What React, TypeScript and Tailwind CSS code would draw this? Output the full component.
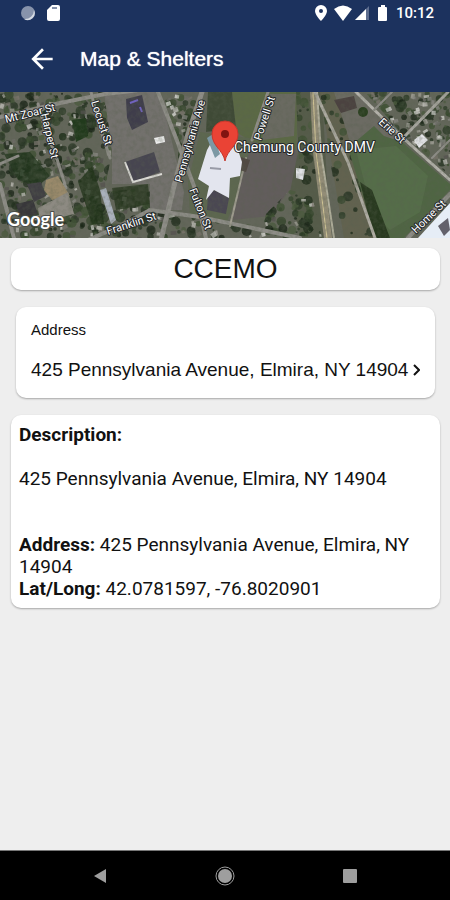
import React from "react";

type Region = {
  id: string;
  points: string;
  box: [number, number, number, number];
  trees: number;
  houses: number;
  seed: number;
};

const neighbourhoods: Region[] = [
  { id: "west", points: "0,0 104,0 112,60 104,100 150,96 150,118 95,146 0,146", box: [0, 0, 150, 146], trees: 480, houses: 190, seed: 7 },
  { id: "mid", points: "163,0 200,0 180,85 178,60", box: [160, 0, 40, 85], trees: 60, houses: 30, seed: 21 },
  { id: "south", points: "150,120 190,124 300,140 300,146 100,146", box: [100, 118, 200, 28], trees: 80, houses: 36, seed: 33 },
  { id: "lotedge", points: "266,122 290,98 312,104 322,146 262,140", box: [262, 98, 60, 48], trees: 85, houses: 8, seed: 44 },
  { id: "median", points: "320,0 333,0 372,110 374,146 342,146", box: [318, 0, 56, 146], trees: 75, houses: 0, seed: 51 },
  { id: "east", points: "365,0 450,0 450,84 404,44", box: [360, 0, 90, 84], trees: 140, houses: 90, seed: 64 },
  { id: "strip", points: "296,0 312,0 318,100 300,90", box: [294, 0, 24, 100], trees: 40, houses: 0, seed: 75 },
];

const treeColors = ["#1f2d1c", "#2a3b25", "#33452b", "#3d5032", "#1a2618", "#4a5a3d", "#273423"];
const houseColors = ["#a5a49c", "#8a8984", "#c4c3bd", "#6f6d6a", "#54524f", "#7b756e", "#dcdcd8"];

function makeRandom(seed: number) {
  let state = seed * 7919;
  return () => {
    state = (state * 16807) % 2147483647;
    return state / 2147483647;
  };
}

function Neighbourhood({ region }: { region: Region }) {
  const random = makeRandom(region.seed);
  const [x, y, w, h] = region.box;
  const trees = Array.from({ length: region.trees }, () => ({
    cx: x + random() * w,
    cy: y + random() * h,
    r: 1 + random() * 4,
    c: treeColors[Math.floor(random() * treeColors.length)],
  }));
  const houses = Array.from({ length: region.houses }, () => ({
    x: x + random() * w,
    y: y + random() * h,
    w: 2 + random() * 4,
    h: 2 + random() * 3,
    a: random() * 50 - 35,
    c: houseColors[Math.floor(random() * houseColors.length)],
  }));
  return (
    <g clipPath={`url(#clip-${region.id})`}>
      <clipPath id={`clip-${region.id}`}>
        <polygon points={region.points} />
      </clipPath>
      {trees.map((t, i) => (
        <circle key={i} cx={t.cx} cy={t.cy} r={t.r} fill={t.c} opacity="0.8" />
      ))}
      {houses.map((b, i) => (
        <rect key={i} x={b.x} y={b.y} width={b.w} height={b.h} fill={b.c} opacity="0.75" transform={`rotate(${b.a} ${b.x} ${b.y})`} />
      ))}
    </g>
  );
}

const streetLabels = [
  { text: "Mt Zoar St", x: 6, y: 31, angle: -14 },
  { text: "Harper St", x: 41, y: 22, angle: 77 },
  { text: "Locust St", x: 91, y: 10, angle: 72 },
  { text: "Pennsylvania Ave", x: 182, y: 91, angle: -74 },
  { text: "Powell St", x: 261, y: 49, angle: -72 },
  { text: "Franklin St", x: 108, y: 143, angle: -18 },
  { text: "Fulton St", x: 189, y: 98, angle: 68 },
  { text: "Erie St", x: 378, y: 31, angle: 42 },
  { text: "Home St", x: 416, y: 142, angle: -44 },
];

function SatelliteMap() {
  return (
    <svg className="block h-[146px] w-full bg-[#595c50]" viewBox="0 0 450 146" preserveAspectRatio="xMidYMid slice" role="img" aria-label="Satellite map of Chemung County DMV">
      <defs>
        <filter id="ground" x="0" y="0" width="100%" height="100%">
          <feTurbulence type="fractalNoise" baseFrequency="0.22" numOctaves="3" seed="4" />
          <feColorMatrix values="0 0 0 0 0.1  0 0 0 0 0.12  0 0 0 0 0.08  1.6 0 0 0 -0.6" />
        </filter>
      </defs>
      <rect width="450" height="146" fill="#63665a" />

      {/* lots and open ground */}
      <polygon points="104,0 160,0 184,100 182,118 148,118 150,92 112,92 112,60" fill="#73716d" />
      <polygon points="232,0 300,0 296,58 252,50 236,40" fill="#5b6945" />
      <polygon points="208,0 232,0 236,36 206,40" fill="#3f4a36" />
      <polygon points="200,40 250,46 246,80 226,132 190,122 188,90" fill="#5d674f" />
      <polygon points="252,50 296,58 300,84 270,124 232,128 240,90" fill="#625d5c" />
      <polygon points="270,2 296,2 294,44 262,48" fill="#6a6a61" />
      <polygon points="296,0 322,0 330,146 300,146 290,100 298,60" fill="#555b49" />
      <polygon points="320,0 336,0 376,146 344,146" fill="#62624f" />
      <polygon points="334,0 360,0 404,46 350,50" fill="#6c6b63" />

      {neighbourhoods.map((region) => (
        <Neighbourhood key={region.id} region={region} />
      ))}

      {/* field beside the tracks */}
      <polygon points="348,56 374,34 384,44 402,50 450,92 450,98 404,146 376,146" fill="#4f6543" />
      <polygon points="356,58 396,54 428,84 420,120 390,138 372,120" fill="#58704c" opacity="0.7" />
      <path d="M360 90 L372 98 L390 146 H374 Z" fill="#28391f" />
      <circle cx="363" cy="20" r="5" fill="#2b4020" />

      {/* dark tree clusters */}
      <path d="M4 62 L30 60 L50 84 L38 94 L18 88 Z" fill="#22361d" opacity="0.85" />
      <path d="M72 28 L86 26 L88 44 L76 50 Z" fill="#213a1c" />
      <path d="M78 90 L92 74 L100 98 L104 132 H92 Z" fill="#203319" opacity="0.8" />
      <path d="M112 96 L148 92 L150 112 L116 118 Z" fill="#28371f" opacity="0.8" />

      {/* roads */}
      <g fill="none" stroke="#8e8d87" strokeLinecap="round">
        <path d="M0 25 L60 11 L105 2 L140 -2" strokeWidth="4" />
        <path d="M38 12 L46 40 L56 64 L66 96" strokeWidth="3" />
        <path d="M91 0 L98 30 L110 66" strokeWidth="3" />
        <path d="M0 72 L18 64" strokeWidth="3" />
        <path d="M0 92 L14 146" strokeWidth="4" />
        <path d="M161 148 L174 94 L188 42 L202 0" strokeWidth="5" />
        <path d="M158 0 L176 46 L194 94 L206 146" strokeWidth="4" />
        <path d="M88 148 L120 134 L150 118 L200 125 L300 146" strokeWidth="4" />
        <path d="M246 66 L230 134" strokeWidth="2" stroke="#a19e91" />
        <path d="M268 0 L252 48" strokeWidth="3" />
        <path d="M314 0 L317 60 L328 146" strokeWidth="8" stroke="#938d77" />
        <path d="M313 0 L316 60 L327 146" strokeWidth="1" stroke="#d0c495" />
        <path d="M317 0 L321 60 L334 146" strokeWidth="2" stroke="#b0ae9b" />
        <path d="M315 0 L348 70 L375 146" strokeWidth="3" stroke="#aeaba2" />
        <path d="M356 0 L403 46 L450 88" strokeWidth="3" stroke="#b3b1aa" />
        <path d="M403 46 L448 0" strokeWidth="3" stroke="#a5a49d" />
        <path d="M374 18 L392 0" strokeWidth="2" />
        <path d="M432 66 L450 48" strokeWidth="2" />
        <path d="M408 146 L450 102" strokeWidth="4" />
      </g>

      {/* buildings */}
      <path d="M46 88 L58 84 L70 104 L52 108 L44 98 Z" fill="#9a8a6b" />
      <polygon points="27,92 41,90 46,104 34,110" fill="#403f43" />
      <polygon points="16,112 33,108 38,122 20,126" fill="#38373a" />
      <polygon points="38,116 68,100 74,122 40,131" fill="#8d8a82" />
      <polygon points="100,98 106,96 116,128 111,132" fill="#aab1bc" />
      <polygon points="126,7 142,3 148,30 132,38 127,26" fill="#3f3d4b" />
      <path d="M130 11 L138 8 M140 15 L142 20" stroke="#7163c2" strokeWidth="2" />
      <polygon points="125,70 154,60 160,80 133,90" fill="#474550" />
      <path d="M125 70 L133 90 L162 82" fill="none" stroke="#e0dfdb" strokeWidth="2" />
      <polygon points="154,46 164,44 165,50 156,52" fill="#eeeeee" />
      <polygon points="208,104 214,98 229,106 226,122 207,118" fill="#4a4752" />
      <polygon points="238,64 250,68 246,80 239,78" fill="#514943" />
      <polygon points="334,8 354,4 357,16 341,21" fill="#4b4240" />
      <polygon points="414,48 422,42 428,48 419,56" fill="#e6e6ea" />
      <polygon points="296,76 305,77 303,88 296,86" fill="#e0e2e5" />

      <rect width="450" height="146" filter="url(#ground)" opacity="0.45" />

      {/* bright roofs */}
      <polygon points="207,58 216,42 238,58 242,70 240,84 230,86 229,106 214,98 206,108 209,94 198,87" fill="#e3e5ee" />
      <path d="M207 46 L213 42 L220 62 L215 66 Z" fill="#7c98a4" />
      <path d="M210 76 L221 77" stroke="#999ba7" strokeWidth="2" />
      <polygon points="418,146 450,111 450,146" fill="#e6edf6" />
      <polygon points="438,134 448,126 450,138 444,144" fill="#63616b" />

      {/* labels */}
      <g fill="#ffffff" stroke="#23272a" strokeWidth="2" strokeLinejoin="round" style={{ paintOrder: "stroke" }} className="font-['Roboto','Open_Sans',sans-serif]">
        {streetLabels.map((label) => (
          <text key={label.text} x={label.x} y={label.y} fontSize="11" transform={`rotate(${label.angle} ${label.x} ${label.y})`}>
            {label.text}
          </text>
        ))}
        <text x="234" y="60" fontSize="14">Chemung County DMV</text>
        <text x="7" y="134" fontSize="18" fontWeight="700" stroke="#4b4d49" className="font-['Lato',sans-serif]">Google</text>
      </g>

      {/* pin */}
      <path d="M225 69 C223 58 212 54 212 42 A13 13 0 0 1 238 42 C238 54 227 58 225 69 Z" fill="#ea4335" stroke="#c5382d" strokeWidth="1" />
      <circle cx="225" cy="42" r="4" fill="#811411" />
    </svg>
  );
}

function StatusBar() {
  return (
    <div className="flex h-[26px] items-center justify-between pr-4 pl-5 text-white">
      <div className="flex items-center gap-2.5">
        <svg className="size-4" viewBox="0 0 16 16" aria-hidden="true">
          <circle cx="8" cy="8" r="7" fill="#8793ab" />
          <path d="M14 5 A7 7 0 0 1 4 14 A9 9 0 0 0 14 5 Z" fill="#d5dae3" />
        </svg>
        <svg className="size-4" viewBox="0 0 16 16" aria-hidden="true">
          <path d="M6 0 H12 Q14 0 14 2 V14 Q14 16 12 16 H3 Q1 16 1 14 V5 Z" fill="#ffffff" />
          <path d="M6 3 H11" stroke="#8793ab" strokeWidth="2" />
        </svg>
      </div>
      <div className="flex items-center">
        <svg className="h-4 w-3" viewBox="0 0 12 16" aria-hidden="true">
          <path fillRule="evenodd" d="M6 0 A6 6 0 0 1 12 6 C12 10 6 16 6 16 C6 16 0 10 0 6 A6 6 0 0 1 6 0 Z M6 4 A2 2 0 1 0 6 8 A2 2 0 1 0 6 4 Z" fill="#ffffff" />
        </svg>
        <svg className="ml-1.5 h-4 w-5" viewBox="0 0 20 16" aria-hidden="true">
          <path d="M1 4 Q10 -3 19 4 L10 16 Z" fill="#ffffff" />
        </svg>
        <svg className="ml-px size-4" viewBox="0 0 16 16" aria-hidden="true">
          <path d="M15 1 V15 H1 Z" fill="#5d6d8f" />
          <path d="M12 4 V15 H1 Z" fill="#ffffff" />
        </svg>
        <svg className="ml-2 h-4 w-2.5" viewBox="0 0 10 16" aria-hidden="true">
          <path d="M3 0 H7 V2 H8 Q9 2 9 3 V15 Q9 16 8 16 H1 Q0 16 0 15 V3 Q0 2 1 2 H3 Z" fill="#ffffff" />
        </svg>
        <time className="ml-2 text-[15px] leading-4 font-medium">10:12</time>
      </div>
    </div>
  );
}

const cardStyle = "rounded-[10px] bg-white shadow-[0_1px_2px_rgba(0,0,0,0.3)]";

export default function App() {
  return (
    <div className="flex min-h-screen flex-col bg-[#eeeeee] font-['Roboto','Open_Sans',sans-serif] text-[#111111]">
      <header className="bg-[#1c325e] text-white">
        <StatusBar />
        <div className="flex h-[66px] items-center gap-[22px] pl-[26px]">
          <button type="button" aria-label="Back" className="size-8">
            <svg className="size-8" viewBox="0 0 24 24" fill="#ffffff" aria-hidden="true">
              <path d="M20 11H7.83l5.59-5.59L12 4l-8 8 8 8 1.41-1.41L7.83 13H20v-2z" />
            </svg>
          </button>
          <h1 className="font-['Liberation_Sans',sans-serif] text-[21px] leading-6 [text-shadow:0_0_1px_white]">Map &amp; Shelters</h1>
        </div>
      </header>

      <SatelliteMap />

      <main className="flex flex-1 flex-col pt-[10px] pr-[10px] pl-[11px]">
        <h2 className={`${cardStyle} flex h-[42px] items-center justify-center font-['Liberation_Sans',sans-serif] text-[28px]`}>CCEMO</h2>

        <section className={`${cardStyle} mx-[5px] mt-[17px] px-[15px] pt-[11px] pb-4 font-['Liberation_Sans',sans-serif]`}>
          <h3 className="text-[15px] leading-6">Address</h3>
          <button type="button" className="mt-4 flex w-full items-center justify-between text-left text-[19px] leading-6 whitespace-nowrap">
            425 Pennsylvania Avenue, Elmira, NY 14904
            <svg className="h-3 w-2 shrink-0" viewBox="0 0 8 12" fill="none" stroke="#111111" strokeWidth="2" aria-hidden="true">
              <path d="M2 1 L7 6 L2 11" />
            </svg>
          </button>
        </section>

        <section className={`${cardStyle} mt-[17px] px-2 pt-[9px] pb-2 text-[19px] leading-[22px]`}>
          <h3 className="font-bold">Description:</h3>
          <p className="mt-[22px]">425 Pennsylvania Avenue, Elmira, NY 14904</p>
          <p className="mt-11">
            <b>Address:</b> 425 Pennsylvania Avenue, Elmira, NY 14904
          </p>
          <p>
            <b>Lat/Long:</b> 42.0781597, -76.8020901
          </p>
        </section>
      </main>

      <nav aria-label="System" className="flex h-[50px] items-center justify-between border-t border-[#777777] bg-black px-[92px]">
        <button type="button" aria-label="Back" className="size-4">
          <svg className="size-4" viewBox="0 0 16 16" aria-hidden="true">
            <path d="M2 8 L14 1 V15 Z" fill="#9e9e9e" />
          </svg>
        </button>
        <button type="button" aria-label="Home" className="size-5">
          <svg className="size-5" viewBox="0 0 20 20" aria-hidden="true">
            <circle cx="10" cy="10" r="9" fill="none" stroke="#9e9e9e" strokeWidth="1" />
            <circle cx="10" cy="10" r="7" fill="#9e9e9e" />
          </svg>
        </button>
        <button type="button" aria-label="Recent apps" className="size-4">
          <svg className="size-4" viewBox="0 0 16 16" aria-hidden="true">
            <rect x="1" y="1" width="14" height="14" rx="1" fill="#9e9e9e" />
          </svg>
        </button>
      </nav>
    </div>
  );
}
